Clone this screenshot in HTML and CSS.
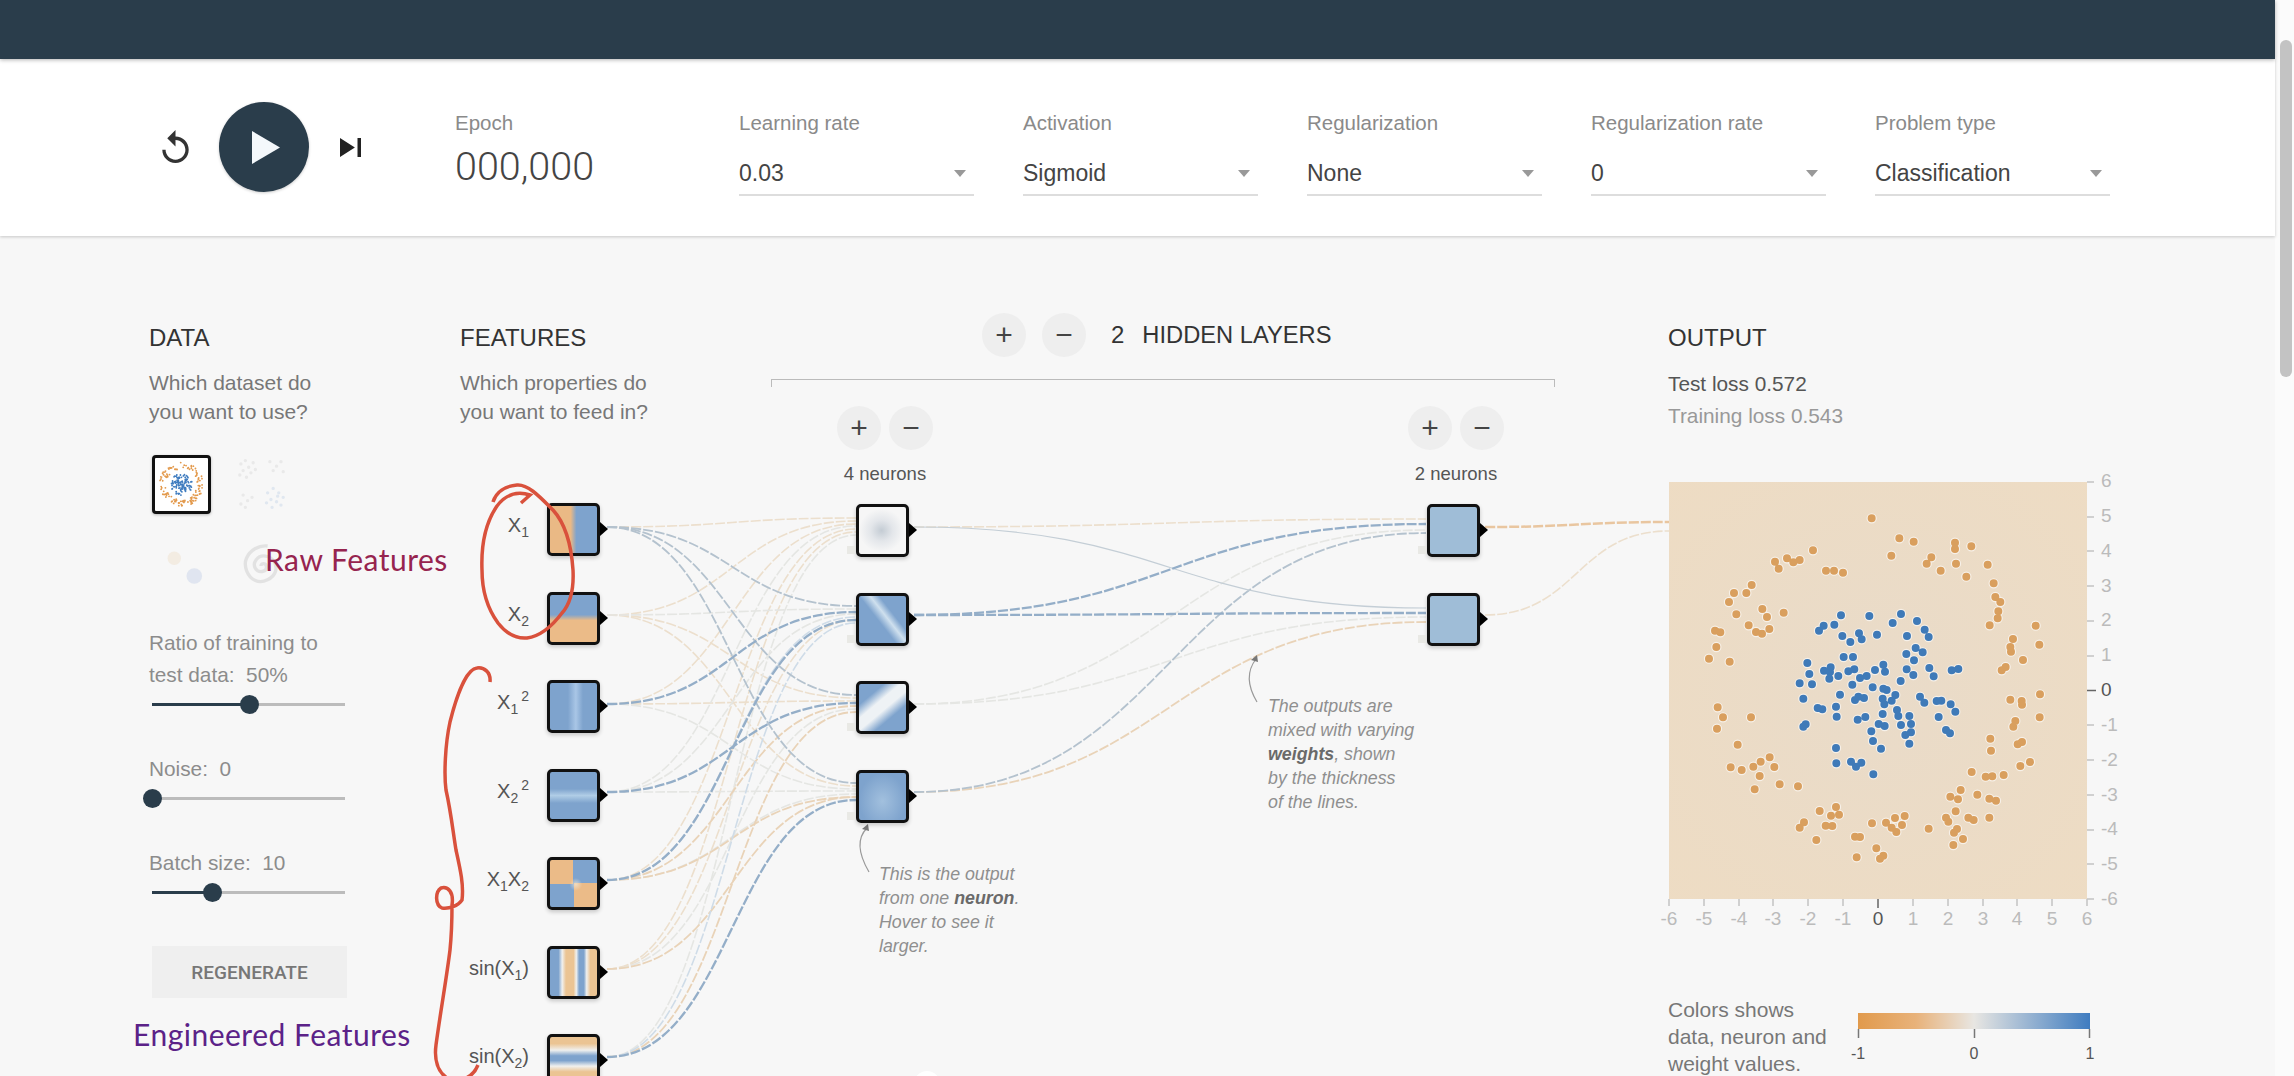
FILE: index.html
```html
<!DOCTYPE html>
<html lang="en">
<head>
  <meta charset="UTF-8" />
  <title>Tensorflow Playground</title>
  <link rel="stylesheet" href="styles.css">
</head>
<body>
  <div class="page">
    <div class="app">
      <header class="topbar"></header>

      <section class="toolbar">
        <svg class="icon-reset" viewBox="4 1 16 20"><path d="M12 5V1L7 6l5 5V7c3.31 0 6 2.69 6 6s-2.69 6-6 6-6-2.69-6-6H4c0 4.42 3.58 8 8 8s8-3.58 8-8-3.58-8-8-8z"/></svg>
        <div class="play-btn"><svg viewBox="0 0 28 33"><path d="M0 0L28 16.5 0 33z"/></svg></div>
        <svg class="icon-step" viewBox="6 6 12 12" preserveAspectRatio="none"><path d="M6 18l8.5-6L6 6v12zM16 6v12h2V6h-2z"/></svg>
        <div class="epoch">
          <div class="field-label">Epoch</div>
          <div class="epoch-value">000,000</div>
        </div>
        <div class="dropdown">
          <div class="field-label">Learning rate</div>
          <div class="select"><span>0.03</span><i class="caret"></i></div>
        </div>
        <div class="dropdown">
          <div class="field-label">Activation</div>
          <div class="select"><span>Sigmoid</span><i class="caret"></i></div>
        </div>
        <div class="dropdown">
          <div class="field-label">Regularization</div>
          <div class="select"><span>None</span><i class="caret"></i></div>
        </div>
        <div class="dropdown">
          <div class="field-label">Regularization rate</div>
          <div class="select"><span>0</span><i class="caret"></i></div>
        </div>
        <div class="dropdown">
          <div class="field-label">Problem type</div>
          <div class="select"><span>Classification</span><i class="caret"></i></div>
        </div>
      </section>

      <main class="main">
        <!-- data column -->
        <section class="col-data">
          <h2 class="col-title">DATA</h2>
          <p class="col-desc">Which dataset do<br>you want to use?</p>
          <div class="thumbs">
            <div class="thumb selected">
              <svg viewBox="87 37 1253 1251">
                <use href="#dots-orange" class="thumb-orange"/>
                <use href="#dots-blue" class="thumb-blue"/>
              </svg>
            </div>
            <div class="thumb faded">
              <svg viewBox="0 0 53 53">
                <path class="scatter-grey" d="M8 8h0M12 5h0M15 11h0M19 7h0M10 14h0M17 16h0M7 18h0M13 20h0M21 13h0M34 6h0M40 10h0M44 6h0M37 14h0M46 15h0M10 36h0M14 41h0M8 44h0M18 38h0M12 47h0"/>
                <path class="scatter-blue" d="M32 34h0M37 30h0M42 34h0M46 38h0M35 40h0M40 42h0M44 45h0M36 47h0M31 43h0M41 37h0"/>
              </svg>
            </div>
            <div class="thumb faded">
              <svg viewBox="0 0 53 53">
                <circle class="blob-orange" cx="20" cy="20" r="6"/>
                <circle class="blob-blue" cx="38" cy="36" r="7"/>
              </svg>
            </div>
            <div class="thumb faded">
              <svg viewBox="0 0 53 53">
                <path class="spiral" d="M26 27c0-3 5-3 5 1s-7 6-10 1 2-12 9-11 11 8 9 14-11 11-18 8-11-13-8-20 11-12 19-11"/>
              </svg>
            </div>
          </div>

          <div class="slider-label first">Ratio of training to<br>test data:&nbsp; 50%</div>
          <div class="slider"><div class="slider-fill" style="width:50%"><i class="knob"></i></div></div>
          <div class="slider-label">Noise:&nbsp; 0</div>
          <div class="slider"><div class="slider-fill" style="width:0%"><i class="knob"></i></div></div>
          <div class="slider-label">Batch size:&nbsp; 10</div>
          <div class="slider"><div class="slider-fill" style="width:31%"><i class="knob"></i></div></div>
          <button class="regen-btn">REGENERATE</button>
        </section>

        <!-- network column: links + nodes -->
        <section class="col-network">
          <svg class="links" viewBox="460 236 1208 840">
            <g class="link pale-org">
              <path d="M607 527C732 527 732 518 856 518"/>
              <path d="M607 615C732 615 732 521 856 521"/>
              <path d="M607 704C732 704 732 524 856 524"/>
              <path d="M607 969C732 969 732 532 856 532"/>
              <path d="M607 615C732 615 732 698 856 698"/>
              <path d="M607 704C732 704 732 701 856 701"/>
              <path d="M607 615C732 615 732 786 856 786"/>
              <path d="M607 880C732 880 732 529 856 529"/>
              <path d="M607 969C732 969 732 620 856 620"/>
              <path d="M1485 615C1577 615 1577 531 1669 531"/>
              <path d="M914 527C1170 527 1170 519 1426 519"/>
            </g>
            <g class="link pale-grey">
              <path d="M607 792C732 792 732 526 856 526"/>
              <path d="M607 1057C732 1057 732 535 856 535"/>
              <path d="M607 615C732 615 732 609 856 609"/>
              <path d="M607 792C732 792 732 614 856 614"/>
              <path d="M607 704C732 704 732 789 856 789"/>
              <path d="M607 792C732 792 732 791 856 791"/>
              <path d="M607 880C732 880 732 794 856 794"/>
              <path d="M607 969C732 969 732 709 856 709"/>
              <path d="M914 704C1170 704 1170 530 1426 530"/>
              <path d="M914 704C1170 704 1170 617 1426 617"/>
            </g>
            <g class="link mid-org">
              <path d="M607 880C732 880 732 706 856 706"/>
              <path d="M607 1057C732 1057 732 712 856 712"/>
              <path d="M607 880C732 880 732 797 856 797"/>
              <path d="M607 969C732 969 732 797 856 797"/>
              <path d="M914 792C1170 792 1170 622 1426 622"/>
            </g>
            <g class="link pale-blue">
              <path d="M607 1057C732 1057 732 623 856 623"/>
              <path d="M607 880C732 880 732 617 856 617"/>
            </g>
            <g class="link grey-blue">
              <path d="M607 527C732 527 732 606 856 606"/>
              <path d="M607 527C732 527 732 695 856 695"/>
              <path d="M607 527C732 527 732 783 856 783"/>
              <path d="M914 792C1170 792 1170 533 1426 533"/>
              <path class="thin" d="M914 527C1170 527 1170 608 1426 608"/>
            </g>
            <g class="link strong-blue">
              <path d="M607 704C732 704 732 612 856 612"/>
              <path d="M607 792C732 792 732 703 856 703"/>
              <path d="M607 880C732 880 732 620 856 620"/>
              <path d="M607 1057C732 1057 732 800 856 800"/>
              <path d="M914 615C1170 615 1170 524 1426 524"/>
              <path d="M914 615C1170 615 1170 613 1426 613"/>
            </g>
            <path class="link-out" d="M1485 527C1577 527 1577 522 1669 522"/>
            <path class="pointer" d="M869 872Q852 843 867 828"/>
            <path class="pointer-head" d="M868 824l-6 5 7 2z"/>
            <path class="pointer" d="M1257 702Q1242 677 1256 659"/>
            <path class="pointer-head" d="M1257 655l-6 5 7 2z"/>
            <circle class="bump" cx="927" cy="1084" r="13"/>
          </svg>

          <div class="network-head">
            <div class="features-head">
              <h2 class="col-title">FEATURES</h2>
              <p class="col-desc">Which properties do<br>you want to feed in?</p>
            </div>
            <div class="layers-head">
              <div class="layers-row">
                <span class="round-btn">+</span>
                <span class="round-btn">&minus;</span>
                <span class="layers-count">2</span>
                <span class="layers-title">HIDDEN LAYERS</span>
              </div>
              <div class="bracket"></div>
            </div>
          </div>

          <div class="features">
            <div class="feature"><span class="feat-label">X<sub>1</sub></span><div class="node n-x1"></div></div>
            <div class="feature"><span class="feat-label">X<sub>2</sub></span><div class="node n-x2"></div></div>
            <div class="feature"><span class="feat-label">X<sub>1</sub><sup>2</sup></span><div class="node n-x1sq"></div></div>
            <div class="feature"><span class="feat-label">X<sub>2</sub><sup>2</sup></span><div class="node n-x2sq"></div></div>
            <div class="feature"><span class="feat-label">X<sub>1</sub>X<sub>2</sub></span><div class="node n-x1x2"></div></div>
            <div class="feature"><span class="feat-label">sin(X<sub>1</sub>)</span><div class="node n-sin1"></div></div>
            <div class="feature"><span class="feat-label">sin(X<sub>2</sub>)</span><div class="node n-sin2"></div></div>
          </div>

          <div class="layer layer-a">
            <div class="layer-btns"><span class="round-btn">+</span><span class="round-btn">&minus;</span></div>
            <div class="neuron-count">4 neurons</div>
            <div class="layer-nodes">
              <div class="node hidden n-h1"></div>
              <div class="node hidden n-h2"></div>
              <div class="node hidden n-h3"></div>
              <div class="node hidden n-h4"></div>
            </div>
          </div>

          <div class="layer layer-b">
            <div class="layer-btns"><span class="round-btn">+</span><span class="round-btn">&minus;</span></div>
            <div class="neuron-count">2 neurons</div>
            <div class="layer-nodes">
              <div class="node hidden n-out"></div>
              <div class="node hidden n-out"></div>
            </div>
          </div>

          <p class="callout callout-neuron">This is the output<br>from one <b>neuron</b>.<br>Hover to see it<br>larger.</p>
          <p class="callout callout-weights">The outputs are<br>mixed with varying<br><b>weights</b>, shown<br>by the thickness<br>of the lines.</p>
        </section>

        <!-- output column -->
        <section class="col-output">
          <h2 class="col-title">OUTPUT</h2>
          <div class="loss test">Test loss 0.572</div>
          <div class="loss train">Training loss 0.543</div>

          <svg class="plot" viewBox="1669 482 418 417">
            <defs>
              <radialGradient id="plot-bg" cx="50%" cy="50%" r="75%">
                <stop offset="0" stop-color="#e9dbc9"/>
                <stop offset="1" stop-color="#eedcc3"/>
              </radialGradient>
              <linearGradient id="scale-bg">
                <stop offset="0" stop-color="#e19a4c"/>
                <stop offset="0.25" stop-color="#e8b27a"/>
                <stop offset="0.5" stop-color="#e8e6e2"/>
                <stop offset="1" stop-color="#3f7cc0"/>
              </linearGradient>
            </defs>
            <rect x="1669" y="482" width="418" height="417" fill="url(#plot-bg)"/>
            <g transform="translate(1640 470) scale(0.33333)">
              <g class="dots-halo"><use href="#dots-orange"/><use href="#dots-blue"/></g>
              <g class="dots dot-orange">
                <path id="dots-orange" d="M695 145h0M778 205h0M821 215h0M945 218h0M945 237h0M994 229h0M754 257h0M874 262h0M860 281h0M948 281h0M902 302h0M1043 284h0M979 320h0M1061 340h0M1066 381h0M1081 396h0M1075 424h0M1073 445h0M1049 466h0M1187 467h0M1119 507h0M1198 524h0M1111 531h0M1113 545h0M1149 570h0M1097 591h0M1085 601h0M1111 689h0M1145 693h0M1146 704h0M1200 673h0M1126 753h0M1120 770h0M1199 742h0M1051 806h0M1146 816h0M1133 823h0M1053 842h0M1170 876h0M1141 888h0M519 241h0M441 265h0M479 270h0M460 277h0M405 275h0M416 296h0M558 302h0M582 302h0M609 308h0M335 345h0M282 369h0M319 369h0M267 396h0M367 417h0M381 441h0M289 433h0M431 428h0M326 466h0M388 477h0M348 486h0M366 491h0M225 482h0M241 487h0M229 531h0M207 566h0M269 575h0M233 712h0M249 742h0M333 742h0M231 776h0M293 824h0M389 862h0M362 875h0M340 890h0M272 892h0M305 900h0M403 891h0M359 918h0M344 958h0M419 943h0M474 949h0M995 906h0M1037 920h0M1057 919h0M1091 915h0M962 960h0M931 980h0M954 988h0M1012 974h0M1048 986h0M1068 992h0M947 1024h0M918 1043h0M925 1055h0M985 1043h0M1001 1050h0M1048 1043h0M951 1077h0M942 1088h0M969 1107h0M940 1125h0M866 1076h0M794 1038h0M765 1044h0M738 1058h0M786 1065h0M755 1073h0M769 1086h0M696 1060h0M588 1011h0M539 1023h0M573 1037h0M597 1034h0M492 1057h0M479 1073h0M557 1067h0M577 1068h0M529 1110h0M645 1100h0M660 1101h0M709 1135h0M730 1157h0M720 1166h0M650 1162h0"/>
              </g>
              <g class="dots dot-blue">
                <path id="dots-blue" d="M603 436h0M688 438h0M783 432h0M758 459h0M831 453h0M854 479h0M866 501h0M551 467h0M583 464h0M537 482h0M607 498h0M631 516h0M657 490h0M665 508h0M711 494h0M801 498h0M827 534h0M848 547h0M799 552h0M822 571h0M611 561h0M639 561h0M502 579h0M508 612h0M479 640h0M516 643h0M552 602h0M572 592h0M570 606h0M568 626h0M595 618h0M625 604h0M643 598h0M660 624h0M680 618h0M705 600h0M730 584h0M735 605h0M800 598h0M820 615h0M868 594h0M881 619h0M935 601h0M955 597h0M782 633h0M637 644h0M600 674h0M698 652h0M730 656h0M740 660h0M766 675h0M490 686h0M655 680h0M672 684h0M645 690h0M728 686h0M733 703h0M755 692h0M840 680h0M853 698h0M890 693h0M904 692h0M932 703h0M946 725h0M533 714h0M547 718h0M588 710h0M771 720h0M728 732h0M590 740h0M653 749h0M676 741h0M775 738h0M808 738h0M896 741h0M497 763h0M490 770h0M716 762h0M734 768h0M783 765h0M813 762h0M813 787h0M796 795h0M918 780h0M930 790h0M694 784h0M699 813h0M723 836h0M808 821h0M588 834h0M589 880h0M633 875h0M664 878h0M648 890h0M700 913h0"/>
              </g>
            </g>
            <path class="ticks" d="M2087 482h7M2087 517h7M2087 551h7M2087 586h7M2087 621h7M2087 656h7M2087 725h7M2087 760h7M2087 795h7M2087 830h7M2087 864h7M2087 899h7M1669 899v7M1704 899v7M1739 899v7M1773 899v7M1808 899v7M1843 899v7M1913 899v7M1948 899v7M1983 899v7M2017 899v7M2052 899v7M2087 899v7"/>
            <path class="ticks zero" d="M2087 690.500h9M1878 899v9"/>
            <g class="axis-y">
              <text x="2101" y="487">6</text><text x="2101" y="522">5</text><text x="2101" y="557">4</text><text x="2101" y="592">3</text><text x="2101" y="626">2</text><text x="2101" y="661">1</text><text x="2101" y="696" class="zero">0</text><text x="2101" y="731">-1</text><text x="2101" y="766">-2</text><text x="2101" y="801">-3</text><text x="2101" y="835">-4</text><text x="2101" y="870">-5</text><text x="2101" y="905">-6</text>
            </g>
            <g class="axis-x">
              <text x="1669" y="925">-6</text><text x="1704" y="925">-5</text><text x="1739" y="925">-4</text><text x="1773" y="925">-3</text><text x="1808" y="925">-2</text><text x="1843" y="925">-1</text><text x="1878" y="925" class="zero">0</text><text x="1913" y="925">1</text><text x="1948" y="925">2</text><text x="1983" y="925">3</text><text x="2017" y="925">4</text><text x="2052" y="925">5</text><text x="2087" y="925">6</text>
            </g>
          </svg>

          <div class="legend">
            <p class="legend-text">Colors shows<br>data, neuron and<br>weight values.</p>
            <svg class="scale" viewBox="0 0 250 56">
              <rect x="8" y="0" width="232" height="16" fill="url(#scale-bg)"/>
              <path class="ticks" d="M8.500 16v9M124.500 16v9M239.500 16v9"/>
              <text x="8" y="46">-1</text><text x="124" y="46">0</text><text x="240" y="46">1</text>
            </svg>
          </div>
        </section>

        <!-- hand drawn notes on top of the page -->
        <svg class="marks" viewBox="0 236 2275 840">
          <path d="M493 502C496 492 505 486 517 485C528 484 540 497 553 510C563 521 571 540 573 570C574 590 571 603 562 613C553 625 542 636 527 638C515 639 505 632 498 623C490 612 482 595 482 570C481 545 486 522 497 506C506 494 518 491 530 495L521 503"/>
          <path d="M490 682C491 672 484 667 477 668C466 669 456 698 450 722C445 745 444 775 446 790C451 812 453 832 456 850C460 868 464 885 462 900C458 906 449 909 442 908C435 905 435 892 441 888C448 886 454 892 452 905C452 920 452 930 450 950C447 975 440 1015 436 1045C434 1060 438 1072 447 1078C458 1082 472 1080 478 1065"/>
        </svg>
        <span class="note note-raw">Raw Features</span>
        <span class="note note-eng">Engineered Features</span>
      </main>
    </div>
    <div class="scrollbar"><div class="scroll-thumb"></div></div>
  </div>
</body>
</html>
```

FILE: styles.css
```css
:root {
  --navy: #2a3d4b;
  --bg: #f7f7f7;
  --label: #8a8a8a;
  --text: #555;
}

* {
  box-sizing: border-box;
}

html, body {
  margin: 0;
  height: 100%;
  overflow: hidden;
}

body {
  font-family: 'Liberation Sans', Arial, sans-serif;
  color: var(--text);
  background: var(--bg);
}

.page {
  display: flex;
  height: 1076px;
}

.app {
  flex: 1;
  min-width: 0;
  display: flex;
  flex-direction: column;
}

.scrollbar {
  width: 19px;
  background: #fbfbfb;
  padding: 40px 2px 0 5px;
}

.scroll-thumb {
  height: 337px;
  background: #c3c3c3;
  border-radius: 6px;
}

/* top bars */
.topbar {
  height: 59px;
  background: var(--navy);
  box-shadow: 0 1px 4px rgba(0, 0, 0, 0.3);
  position: relative;
  z-index: 2;
}

.toolbar {
  height: 177px;
  background: #fff;
  box-shadow: 0 1px 3px rgba(0, 0, 0, 0.2);
  display: flex;
  align-items: flex-start;
  padding: 52px 0 0 162px;
  position: relative;
  z-index: 1;
}

.icon-reset {
  width: 27px;
  height: 33px;
  margin: 19px 30px 0 0;
  fill: #333;
}

.play-btn {
  width: 90px;
  height: 90px;
  margin-top: -9px;
  margin-right: 31px;
  border-radius: 50%;
  background: var(--navy);
  display: flex;
  align-items: center;
  justify-content: center;
  padding-left: 4px;
  box-shadow: 0 1px 3px rgba(0, 0, 0, 0.2);
}

.play-btn svg {
  width: 28px;
  height: 33px;
  fill: #f4f8fb;
}

.icon-step {
  width: 21px;
  height: 19px;
  margin: 27px 94px 0 0;
  fill: #222;
}

.field-label {
  font-size: 20.500px;
  line-height: 24px;
  color: var(--label);
}

.epoch {
  width: 284px;
}

.epoch-value {
  font-family: Roboto, sans-serif;
  font-weight: 300;
  font-size: 39.500px;
  line-height: 44px;
  margin-top: 10px;
  color: #444;
}

.dropdown {
  width: 235px;
  margin-right: 49px;
}

.select {
  margin-top: 23px;
  padding: 0 8px 6px 0;
  border-bottom: 2px solid #ddd;
  display: flex;
  align-items: center;
  justify-content: space-between;
  font-size: 23px;
  line-height: 30px;
  color: #444;
}

.caret {
  width: 0;
  height: 0;
  border-left: 6px solid transparent;
  border-right: 6px solid transparent;
  border-top: 7px solid #999;
}

/* main area */
.main {
  flex: 1;
  position: relative;
  overflow: hidden;
  display: grid;
  grid-template-columns: 311px 1208px 1fr;
  padding: 77px 0 0 149px;
}

.col-title {
  margin: 0;
  padding-top: 11px;
  font-size: 24px;
  line-height: 28px;
  font-weight: 400;
  color: #333;
}

.col-desc {
  margin: 16px 0 0;
  font-size: 21px;
  line-height: 29px;
  color: #777;
}

/* data column */
.thumbs {
  display: grid;
  grid-template-columns: 59px 59px;
  gap: 22px 21px;
  margin: 29px 0 0 3px;
}

.thumb {
  height: 59px;
}

.thumb svg {
  display: block;
  width: 100%;
  height: 100%;
}

.thumb.selected {
  border: 3px solid #111;
  border-radius: 4px;
  background: #fff;
  box-shadow: 0 1px 3px rgba(0, 0, 0, 0.25);
}

.thumb.faded {
  opacity: 0.12;
}

.thumb-orange, .thumb-blue {
  fill: none;
  stroke-linecap: round;
  stroke-width: 44px;
}

.thumb-orange { stroke: #e39a4d; }
.thumb-blue { stroke: #3f7cbf; }

.scatter-grey, .scatter-blue {
  fill: none;
  stroke-width: 3px;
  stroke-linecap: round;
}

.scatter-grey { stroke: #888; }
.scatter-blue { stroke: #3f7cbf; }
.blob-orange { fill: #d9a050; }
.blob-blue { fill: #3f6cbf; }

.spiral {
  fill: none;
  stroke: #555;
  stroke-width: 3px;
}

.slider-label {
  margin-top: 47px;
  font-size: 20.800px;
  line-height: 32px;
  color: #8c8c8c;
}

.slider-label.first {
  margin-top: 32px;
}

.slider {
  position: relative;
  width: 193px;
  height: 3px;
  margin: 12px 0 0 3px;
  background: #bcbcbc;
}

.slider-fill {
  position: relative;
  height: 3px;
  background: var(--navy);
}

.knob {
  position: absolute;
  right: -10px;
  top: -8px;
  width: 19px;
  height: 19px;
  border-radius: 50%;
  background: var(--navy);
}

.regen-btn {
  display: block;
  width: 195px;
  height: 52px;
  margin: 52px 0 0 3px;
  border: 0;
  background: #efefef;
  color: #777;
  font-family: Roboto, sans-serif;
  font-weight: 500;
  font-size: 19px;
}

/* network column */
.col-network {
  position: relative;
}

.links {
  position: absolute;
  left: 0;
  top: -77px;
  width: 1208px;
  height: 840px;
  overflow: visible;
}

.link path, .link-out {
  fill: none;
  stroke-dasharray: 10 2;
}

.pale-org path { stroke: #ecdfcd; stroke-width: 1.6px; }
.pale-grey path { stroke: #e5e6e3; stroke-width: 1.6px; }
.pale-blue path { stroke: #cfdce8; stroke-width: 1.6px; }
.mid-org path { stroke: #e9d3b8; stroke-width: 1.8px; }
.grey-blue path { stroke: #b4c2ce; stroke-width: 1.8px; }
.grey-blue path.thin { stroke: #c4ced6; stroke-width: 1.2px; stroke-dasharray: none; }
.strong-blue path { stroke: #94aec8; stroke-width: 2.3px; }
.link-out { stroke: #e9c6a0; stroke-width: 2.500px; }

.pointer {
  fill: none;
  stroke: #999;
  stroke-width: 1.200px;
}

.pointer-head { fill: #777; }
.bump { fill: #fff; }

.network-head {
  position: relative;
  display: flex;
}

.features-head {
  width: 311px;
}

.layers-head {
  width: 784px;
}

.layers-row {
  display: flex;
  align-items: center;
  height: 44px;
  padding-left: 211px;
}

.round-btn {
  width: 44px;
  height: 44px;
  border-radius: 50%;
  background: #eee;
  display: flex;
  align-items: center;
  justify-content: center;
  font-size: 30px;
  line-height: 1;
  color: #444;
}

.layers-row .round-btn + .round-btn {
  margin-left: 16px;
}

.layers-count {
  margin-left: 25px;
  font-size: 24px;
  color: #333;
}

.layers-title {
  margin-left: 18px;
  font-size: 23.700px;
  color: #333;
}

.bracket {
  height: 8px;
  margin-top: 22px;
  border: 1.500px solid #bbb;
  border-bottom: 0;
}

.node {
  position: relative;
  width: 53px;
  height: 53px;
  border: 3px solid #111;
  border-radius: 5px;
  box-shadow: 0 2px 4px rgba(0, 0, 0, 0.2);
}

.node::after {
  content: '';
  position: absolute;
  right: -11px;
  top: 16px;
  border-left: 8px solid #000;
  border-top: 7px solid transparent;
  border-bottom: 7px solid transparent;
}

.node.hidden::before {
  content: '';
  position: absolute;
  left: -12px;
  bottom: 0;
  width: 8px;
  height: 8px;
  background: #e9e9e5;
}

.features {
  position: absolute;
  left: 0;
  top: 190px;
  width: 140px;
  display: flex;
  flex-direction: column;
  gap: 35.500px;
}

.feature {
  display: flex;
  align-items: center;
  justify-content: flex-end;
}

.feat-label {
  margin: 0 18px 8px 0;
  font-size: 20px;
  color: var(--text);
  white-space: nowrap;
}

.feat-label sub, .feat-label sup {
  font-size: 14px;
  line-height: 0;
}

.feat-label sup {
  margin-left: 3px;
}

.layer {
  position: absolute;
  top: 93px;
  width: 150px;
  display: flex;
  flex-direction: column;
  align-items: center;
}

.layer-a { left: 350px; }
.layer-b { left: 921px; }

.layer-btns {
  display: flex;
  gap: 8px;
}

.neuron-count {
  margin-top: 13px;
  font-size: 18.500px;
  line-height: 22px;
  color: #555;
}

.layer-nodes {
  display: flex;
  flex-direction: column;
  gap: 35.500px;
  margin: 19px 6px 0 0;
}

.n-x1 { background: linear-gradient(90deg, #eab985 44%, #7ea3cd 56%); }
.n-x2 { background: linear-gradient(180deg, #7ea3cd 42%, #ebbb88 54%); }
.n-x1sq { background: linear-gradient(90deg, #7ea3cd 38%, #a9c6e6 55%, #7ea3cd 70%); }
.n-x2sq { background: linear-gradient(180deg, #7ea3cd 36%, #b0cde6 50%, #7ea3cd 66%); }
.n-x1x2 {
  background:
    radial-gradient(circle at 55% 52%, rgba(240, 232, 216, 0.7) 0, rgba(240, 232, 216, 0) 18%),
    conic-gradient(#7ea3cd 25%, #ebbb88 25% 50%, #7ea3cd 50% 75%, #ebbb88 75%);
}
.n-sin1 { background: linear-gradient(90deg, #7ea3cd 0 18%, #f0f0ee 26%, #ebc493 34% 50%, #f0f0ee 56%, #7ea3cd 62% 72%, #f0f0ee 78%, #ebc493 86%); }
.n-sin2 { background: linear-gradient(180deg, #ebc493 14%, #f0f0ee 28%, #7ea3cd 40% 50%, #f0f0ee 62%, #ebc493 74%); }

.n-h1 { background: radial-gradient(ellipse at 48% 50%, #c4ccd4 0, #e3e6ea 32%, #f6f6f6 65%); }
.n-h2 { background: linear-gradient(52deg, #7ea3cd 44%, #cfe0ee 57%, #7ea3cd 68%); }
.n-h3 { background: linear-gradient(140deg, #7ea3cd 24%, #eef2f5 40% 54%, #7ea3cd 70%); }
.n-h4 { background: radial-gradient(ellipse at 50% 60%, #a2c0de 0, #7ea3cd 70%); }
.n-out { background: #9fbdd7; }

.callout {
  position: absolute;
  margin: 0;
  font-size: 17.800px;
  line-height: 24px;
  font-style: italic;
  color: #8f8f8f;
}

.callout b {
  color: #6a6a6a;
}

.callout-neuron { left: 419px; top: 549px; }
.callout-weights { left: 808px; top: 381px; }

/* output column */
.loss {
  font-size: 20.800px;
  line-height: 32px;
}

.col-output .col-title + .loss {
  margin-top: 16px;
}

.loss.test { color: #555; }
.loss.train { color: #999; }

.plot {
  display: block;
  width: 418px;
  height: 417px;
  margin: 50px 0 0 1px;
  overflow: visible;
}

.dots {
  fill: none;
  stroke-width: 24px;
  stroke-linecap: round;
}

.dot-orange { stroke: #d99f5e; }
.dot-blue { stroke: #3f7ab8; }

.dots-halo {
  fill: none;
  stroke: #fff;
  stroke-width: 31px;
  stroke-linecap: round;
  opacity: 0.6;
}

.ticks {
  fill: none;
  stroke: #c4c4c4;
  stroke-width: 1.5px;
}

.ticks.zero {
  stroke: #666;
}

.axis-y text, .axis-x text {
  font-size: 19px;
  fill: #bbb;
}

.axis-x text {
  text-anchor: middle;
}

.axis-y text.zero, .axis-x text.zero {
  fill: #555;
}

.legend {
  display: flex;
  margin-top: 97px;
}

.legend-text {
  width: 182px;
  margin: 0;
  font-size: 21px;
  line-height: 27px;
  color: #777;
}

.scale {
  width: 250px;
  height: 56px;
  margin-top: 17px;
  overflow: visible;
}

.scale text {
  font-size: 16px;
  text-anchor: middle;
  fill: #555;
}

.scale .ticks {
  stroke: #777;
}

/* handwriting */
.marks {
  position: absolute;
  left: 0;
  top: 0;
  width: 2275px;
  height: 840px;
  pointer-events: none;
}

.marks path {
  fill: none;
  stroke: #d9513c;
  stroke-width: 3.500px;
}

.note {
  position: absolute;
  font-family: Lato, sans-serif;
  font-size: 30px;
  line-height: 36px;
  white-space: nowrap;
}

.note-raw {
  left: 265px;
  top: 305px;
  color: #96244f;
  letter-spacing: 0.5px;
}

.note-eng {
  left: 133px;
  top: 780px;
  color: #5b2288;
  letter-spacing: 0.5px;
}
```
